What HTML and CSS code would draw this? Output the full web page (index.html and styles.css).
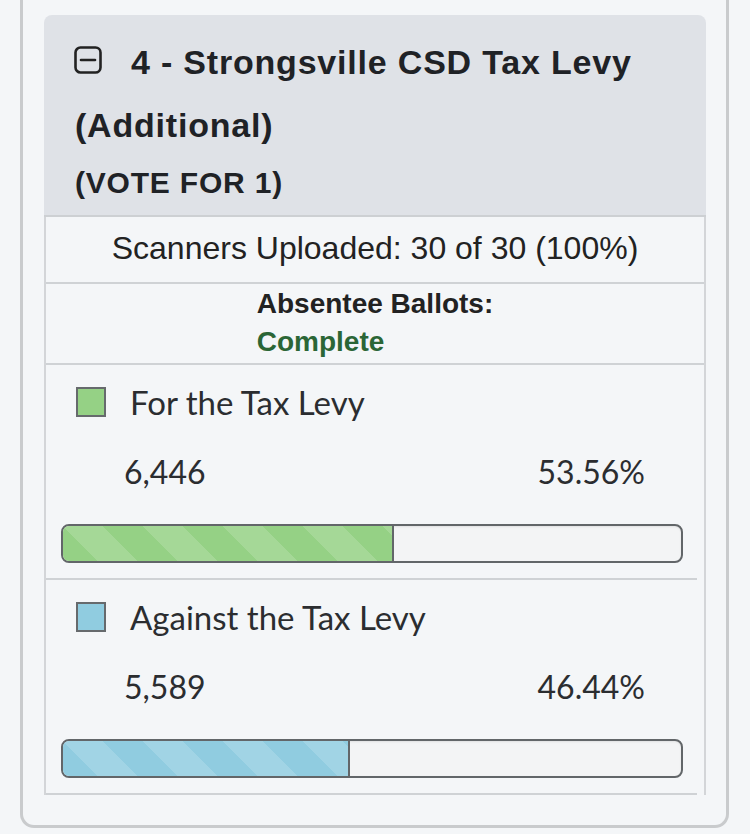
FILE: index.html
```html
<!DOCTYPE html>
<html lang="en">
<head>
<meta charset="utf-8">
<title>Contest results</title>
<link rel="stylesheet" href="styles.css">
</head>
<body>
<div class="panel">
  <section class="card">
    <header class="card-head">
      <h2 class="title"><svg class="toggle" width="28" height="28" viewBox="0 0 28 28" aria-hidden="true"><rect x="1.5" y="1.5" width="25" height="25" rx="5" fill="none" stroke="#222" stroke-width="2.6"/><line x1="7" y1="14" x2="21" y2="14" stroke="#222" stroke-width="2.6" stroke-linecap="round"/></svg>4 - Strongsville CSD Tax Levy (Additional)</h2>
      <div class="vote-for">(VOTE FOR 1)</div>
    </header>
    <div class="card-body">
      <div class="row scanners">Scanners Uploaded: 30 of 30 (100%)</div>
      <div class="row absentee">
        <div class="absentee-inner">
          <div class="abs-label">Absentee Ballots:</div>
          <div class="abs-status">Complete</div>
        </div>
      </div>
      <ul class="choices">
        <li class="choice">
          <div class="choice-name"><span class="swatch swatch-green"></span><span class="name">For the Tax Levy</span></div>
          <div class="choice-nums"><span>6,446</span><span>53.56%</span></div>
          <div class="bar"><div class="fill fill-green" style="width:53.56%"></div></div>
        </li>
        <li class="choice">
          <div class="choice-name"><span class="swatch swatch-blue"></span><span class="name">Against the Tax Levy</span></div>
          <div class="choice-nums"><span>5,589</span><span>46.44%</span></div>
          <div class="bar"><div class="fill fill-blue" style="width:46.44%"></div></div>
        </li>
      </ul>
    </div>
  </section>
</div>
</body>
</html>
```
FILE: styles.css
```css
* { box-sizing: border-box; }

html, body {
  margin: 0;
  padding: 0;
  background: #f4f6f8;
}

body {
  font-family: "Liberation Sans", Arial, sans-serif;
  color: #222;
  overflow: hidden;
}

.panel {
  margin: -20px 21px 0 20px;
  border: 3px solid #c9cbcd;
  border-top: 0;
  border-radius: 0 0 14px 14px;
  padding: 35px 20px 30px 21px;
}

.card {
  background: #f4f6f8;
}

.card-head {
  background: #dfe2e7;
  border-radius: 8px 8px 0 0;
  padding: 16px 30px 7px 31px;
  border-bottom: 2px solid #cdd0d3;
}

.title {
  margin: 0;
  font-size: 34px;
  letter-spacing: 0.8px;
  line-height: 63px;
  font-weight: bold;
  color: #1f2226;
}

.toggle {
  display: inline-block;
  width: 28px;
  height: 28px;
  margin-left: -1px;
  margin-right: 29px;
}

.vote-for {
  font-size: 30px;
  font-weight: bold;
  letter-spacing: 0.8px;
  line-height: 51px;
  color: #1f2226;
}

.card-body {
  border-left: 2px solid #d3d5d8;
  border-right: 2px solid #d3d5d8;
}

.row {
  border-bottom: 2px solid #cfd2d5;
  text-align: center;
}

.scanners {
  font-size: 32px;
  line-height: 36px;
  padding: 13px 0 16px;
  color: #222;
}

.absentee {
  padding: 1px 0 2px;
}

.absentee-inner {
  display: inline-block;
  text-align: left;
  font-size: 28px;
  font-weight: bold;
  line-height: 38px;
}

.abs-label { color: #222; }
.abs-status { color: #2b6636; }

.choices {
  list-style: none;
  margin: 0;
  padding: 0;
}

.choice {
  margin-right: 7px;
  padding: 22px 14px 15px 15px;
  border-bottom: 2px solid #cfd2d5;
  font-family: Lato, "Noto Sans", sans-serif;
  color: #2b2d30;
}

.choice-name {
  display: flex;
  align-items: center;
  gap: 24px;
  padding-left: 15px;
  height: 30px;
}

.swatch {
  flex: none;
  width: 30px;
  height: 30px;
  border: 2px solid #666a6d;
}

.swatch-green { background: #95d185; }
.swatch-blue { background: #90cce0; }

.name {
  font-size: 33px;
  line-height: 30px;
}

.choice-nums {
  display: flex;
  justify-content: space-between;
  padding: 0 38px 0 63px;
  margin-top: 35px;
  font-size: 32px;
  line-height: 40px;
}

.bar {
  margin-top: 32px;
  height: 39px;
  border: 2px solid #626669;
  border-radius: 8px;
  background: #f3f4f5;
  box-shadow: inset 0 1px 2px rgba(0, 0, 0, 0.08);
  overflow: hidden;
}

.fill {
  height: 100%;
  border-right: 2px solid #626669;
  background-size: 80px 80px;
  background-image: linear-gradient(45deg,
    rgba(255, 255, 255, 0.15) 25%, transparent 25%,
    transparent 50%, rgba(255, 255, 255, 0.15) 50%,
    rgba(255, 255, 255, 0.15) 75%, transparent 75%, transparent);
}

.fill-green { background-color: #95d185; }
.fill-blue { background-color: #90cce0; }
```
